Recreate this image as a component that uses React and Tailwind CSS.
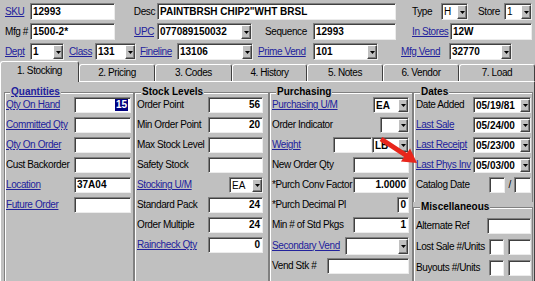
import React from "react";

const sunk =
  "bg-white border border-t-[#808080] border-l-[#808080] border-r-[#ececec] border-b-[#ececec] shadow-[inset_1px_1px_0_#404040]";

function L({ children }) {
  return <span className="text-[#22229c] underline whitespace-nowrap">{children}</span>;
}
function T({ children }) {
  return <span className="whitespace-nowrap">{children}</span>;
}
function Box({ w, h = "h-[16px]", right = false, children }) {
  return (
    <div
      className={`${sunk} ${w} ${h} shrink-0 flex items-center ${
        right ? "justify-end pr-[2px]" : "pl-[2px]"
      } font-bold tracking-normal whitespace-nowrap overflow-hidden`}
    >
      {children}
    </div>
  );
}
function Btn() {
  return (
    <div className="w-[10px] shrink-0 bg-[#c0c0c0] border border-t-white border-l-white border-r-[#404040] border-b-[#404040] shadow-[inset_-1px_-1px_0_#808080] flex items-center justify-center">
      <svg width="5" height="3" viewBox="0 0 5 3">
        <path d="M0 0h5L2.5 3z" fill="#000" />
      </svg>
    </div>
  );
}
function Sel({ w, h = "h-[16px]", bold = true, children }) {
  return (
    <div className={`${sunk} ${w} ${h} shrink-0 flex items-stretch pt-[1px] pl-[1px]`}>
      <div
        className={`flex-1 flex items-center pl-[1px] ${
          bold ? "font-bold" : ""
        } tracking-normal whitespace-nowrap overflow-hidden`}
      >
        {children}
      </div>
      <Btn />
    </div>
  );
}
function Row({ label, link, children, h = "h-[16px]" }) {
  return (
    <div className={`flex items-center justify-between ${h}`}>
      {link ? <L>{label}</L> : <T>{label}</T>}
      <div className="flex items-center shrink-0">{children}</div>
    </div>
  );
}
function Group({ title, link, cls, children }) {
  return (
    <fieldset className={`border border-[#808080] shadow-[inset_1px_1px_0_#ffffff] ${cls}`}>
      <legend className="ml-[4px] px-[1px] leading-[10px] font-bold tracking-normal bg-[#c0c0c0]">
        {link ? <L>{title}</L> : title}
      </legend>
      {children}
    </fieldset>
  );
}

const tabs = [
  ["1. Stocking", "w-[79px]"],
  ["2. Pricing", "w-[76px]"],
  ["3. Codes", "w-[77px]"],
  ["4. History", "w-[75px]"],
  ["5. Notes", "w-[76px]"],
  ["6. Vendor", "w-[76px]"],
  ["7. Load", "w-[76px]"],
];

export default function App() {
  return (
    <div className="relative w-[535px] h-[281px] overflow-hidden bg-[#c0c0c0] text-black text-[10px] leading-[12px] tracking-[-0.4px] font-['Liberation_Sans',Arial,sans-serif]">
      {/* header */}
      <div className="flex flex-col gap-[3px] pt-[3px]">
        <div className="flex items-center h-[17px]">
          <div className="w-[30px] pl-[5px]"><L>SKU</L></div>
          <Box w="w-[85px]" h="h-[17px]">12993</Box>
          <div className="w-[42px] flex justify-end pr-[2px]"><T>Desc</T></div>
          <Box w="w-[239px]" h="h-[17px]">PAINTBRSH CHIP2"WHT BRSL</Box>
          <div className="w-[45px] pl-[16px]"><T>Type</T></div>
          <Sel w="w-[27px]" h="h-[17px]" bold={false}>H</Sel>
          <div className="w-[36px] pl-[10px]"><T>Store</T></div>
          <Sel w="w-[28px]" h="h-[17px]" bold={false}>1</Sel>
        </div>
        <div className="flex items-center h-[17px]">
          <div className="w-[30px] pl-[5px]"><T>Mfg #</T></div>
          <Box w="w-[85px]" h="h-[17px]">1500-2*</Box>
          <div className="w-[42px] flex justify-end pr-[3px]"><L>UPC</L></div>
          <Sel w="w-[95px]" h="h-[17px]">077089150032</Sel>
          <div className="w-[61px] pl-[13px]"><T>Sequence</T></div>
          <Box w="w-[83px]" h="h-[17px]">12993</Box>
          <div className="w-[54px] pl-[16px]"><L>In Stores</L></div>
          <Box w="w-[82px]" h="h-[17px]">12W</Box>
        </div>
        <div className="flex items-center h-[17px]">
          <div className="w-[30px] pl-[5px]"><L>Dept</L></div>
          <Sel w="w-[34px]" h="h-[17px]">1</Sel>
          <div className="w-[31px] pl-[5px]"><L>Class</L></div>
          <Sel w="w-[41px]" h="h-[17px]">131</Sel>
          <div className="w-[41px] pl-[4px]"><L>Fineline</L></div>
          <Sel w="w-[76px]" h="h-[17px]">13106</Sel>
          <div className="w-[60px] pl-[5px]"><L>Prime Vend</L></div>
          <Sel w="w-[65px]" h="h-[17px]">101</Sel>
          <div className="w-[71px] pl-[23px]"><L>Mfg Vend</L></div>
          <Sel w="w-[63px]" h="h-[17px]">32770</Sel>
        </div>
      </div>

      {/* tabs */}
      <div className="flex items-end h-[20px] mt-[1px]">
        {tabs.map(([t, w], i) =>
          i === 0 ? (
            <div
              key={t}
              className={`${w} h-[21px] -mb-[1px] relative z-10 bg-[#c0c0c0] border-t border-l border-r border-t-white border-l-white border-r-[#404040] rounded-t-[3px] flex items-center justify-center pb-[3px]`}
            >
              {t}
            </div>
          ) : (
            <div
              key={t}
              className={`${w} h-[17px] border-t border-l border-r border-t-white border-l-white border-r-[#404040] rounded-t-[3px] flex items-center justify-center pb-[1px]`}
            >
              {t}
            </div>
          )
        )}
      </div>

      {/* panel */}
      <div className="flex border-t border-l border-r border-t-white border-l-white border-r-[#404040] pl-[3px] pt-[5px] h-[210px]">
        <Group title="Quantities" link cls="w-[130px] h-[200px] shrink-0 pl-[1px] pr-[2px]">
          <div className="flex flex-col gap-[4px]">
            <Row label="Qty On Hand" link>
              <Box w="w-[57px]" right>
                <span className="bg-[#000080] text-white px-[1px]">15</span>
              </Box>
            </Row>
            <Row label="Committed Qty" link><Box w="w-[57px]" /></Row>
            <Row label="Qty On Order" link><Box w="w-[57px]" /></Row>
            <Row label="Cust Backorder"><Box w="w-[57px]" /></Row>
            <Row label="Location" link><Box w="w-[57px]">37A04</Box></Row>
            <Row label="Future Order" link><Box w="w-[57px]" /></Row>
          </div>
        </Group>

        <Group title="Stock Levels" cls="w-[135px] h-[200px] shrink-0 pl-[2px] pr-[5px]">
          <div className="flex flex-col gap-[4px]">
            <Row label="Order Point"><Box w="w-[55px]" right>56</Box></Row>
            <Row label="Min Order Point"><Box w="w-[55px]" right>20</Box></Row>
            <Row label="Max Stock Level"><Box w="w-[55px]" right /></Row>
            <Row label="Safety Stock"><Box w="w-[55px]" right /></Row>
            <Row label="Stocking U/M" link><Sel w="w-[34px]" bold={false}>EA</Sel></Row>
            <Row label="Standard Pack"><Box w="w-[55px]" right>24</Box></Row>
            <Row label="Order Multiple"><Box w="w-[55px]" right>24</Box></Row>
            <Row label="Raincheck Qty" link><Box w="w-[55px]" right>0</Box></Row>
          </div>
        </Group>

        <Group title="Purchasing" cls="w-[144px] h-[200px] shrink-0 pl-[2px] pr-[3px]">
          <div className="flex flex-col gap-[4px]">
            <Row label="Purchasing U/M" link><Sel w="w-[36px]">EA</Sel></Row>
            <Row label="Order Indicator"><Sel w="w-[29px]" /></Row>
            <Row label="Weight" link>
              <Box w="w-[39px]" />
              <Sel w="w-[37px]">LB</Sel>
            </Row>
            <Row label="New Order Qty"><Box w="w-[56px]" right /></Row>
            <Row label="*Purch Conv Factor"><Box w="w-[56px]" right>1.0000</Box></Row>
            <Row label="*Purch Decimal Pl"><Box w="w-[12px]" right>0</Box></Row>
            <Row label="Min # of Std Pkgs"><Box w="w-[56px]" right>1</Box></Row>
            <Row label="Secondary Vend" link h="h-[17px]"><Sel w="w-[64px]" h="h-[18px]" /></Row>
            <Row label="Vend Stk #"><Box w="w-[82px]" /></Row>
          </div>
        </Group>

        <div className="w-[120px] shrink-0 flex flex-col">
          <Group title="Dates" cls="border-b-0 pl-[2px] pr-[1px] pb-[9px]">
            <div className="flex flex-col gap-[4px]">
              <Row label="Date Added"><Sel w="w-[58px]">05/19/81</Sel></Row>
              <Row label="Last Sale" link><Sel w="w-[58px]">05/24/00</Sel></Row>
              <Row label="Last Receipt" link><Sel w="w-[58px]">05/23/00</Sel></Row>
              <Row label="Last Phys Inv" link><Sel w="w-[58px]">05/03/00</Sel></Row>
              <Row label="Catalog Date">
                <Box w="w-[16px]" />
                <span className="ml-[4px] mr-[3px]">/</span>
                <Box w="w-[17px]" />
              </Row>
            </div>
          </Group>
          <Group title="Miscellaneous" cls="h-[90px] pl-[2px] pr-[1px] pt-[6px]">
            <div className="flex flex-col gap-[5px]">
              <Row label="Alternate Ref"><Box w="w-[44px]" /></Row>
              <Row label="Lost Sale #/Units">
                <Box w="w-[15px]" />
                <div className="w-[4px]" />
                <Box w="w-[23px]" />
              </Row>
              <Row label="Buyouts #/Units">
                <Box w="w-[15px]" />
                <div className="w-[4px]" />
                <Box w="w-[23px]" />
              </Row>
            </div>
          </Group>
        </div>
      </div>

      {/* red arrow overlay */}
      <svg className="absolute inset-0 pointer-events-none" width="535" height="281" viewBox="0 0 535 281">
        <polygon
          points="382.4,136.9 406.9,152.9 410.1,148.4 417,163 400.9,161.6 404.1,157.1 379.6,141.1"
          fill="#e8261c"
        />
      </svg>
    </div>
  );
}
